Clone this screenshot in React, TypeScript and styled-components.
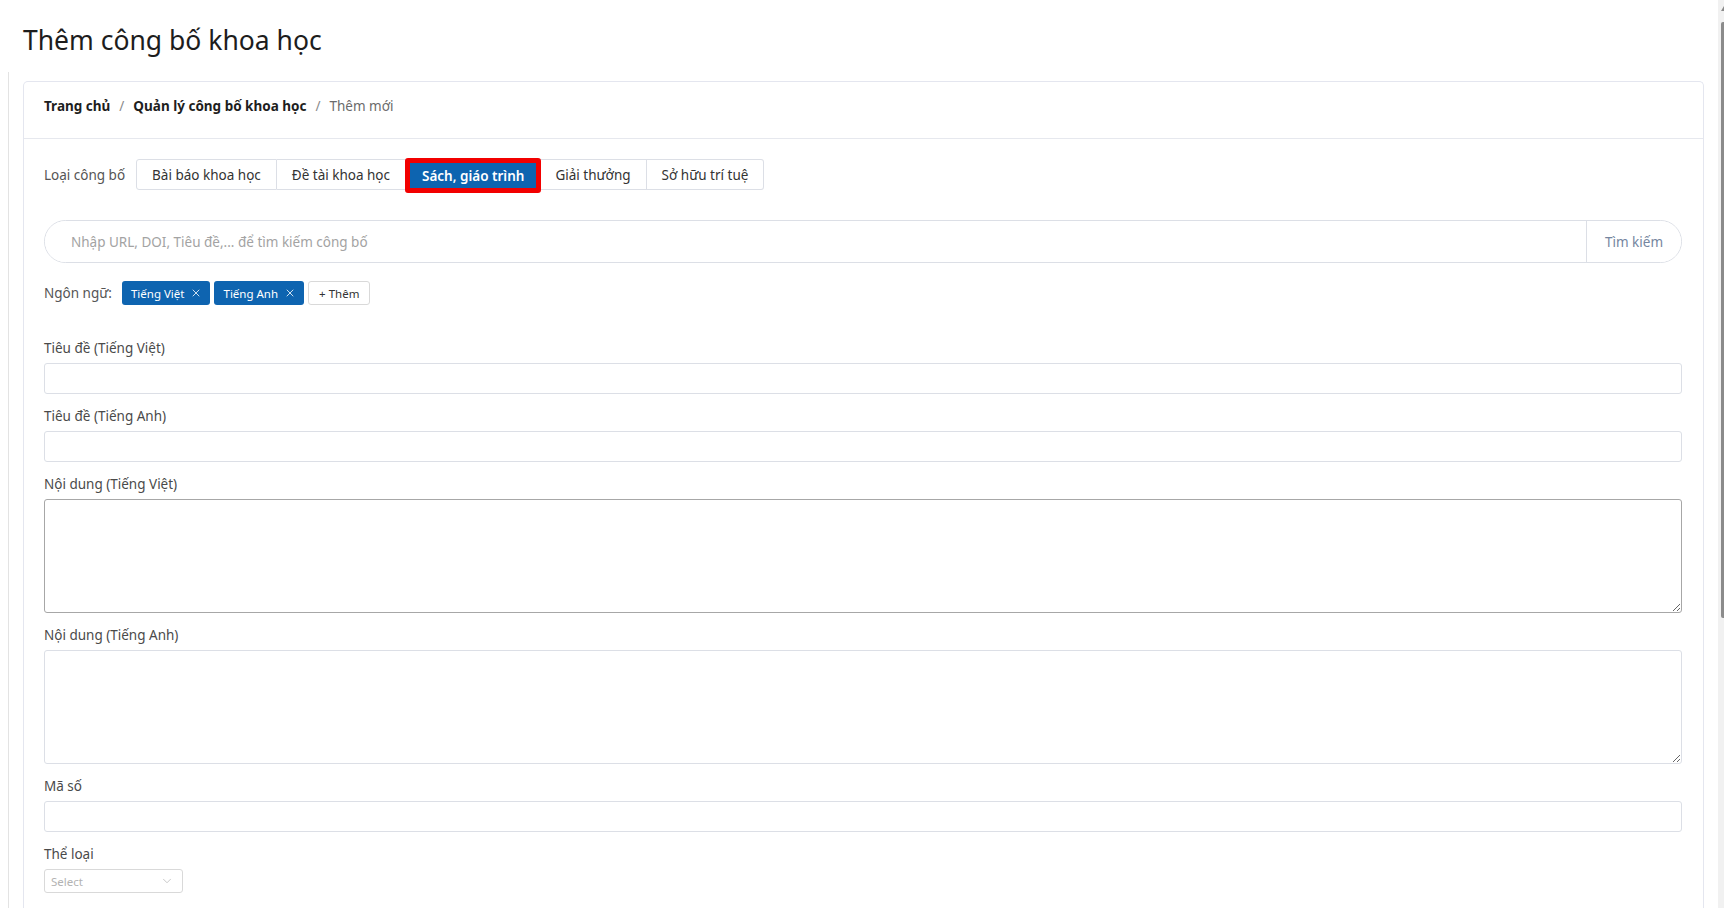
import styled, { createGlobalStyle } from "styled-components";
import { X, ChevronDown } from "lucide-react";

const GlobalStyle = createGlobalStyle`
  html, body {
    margin: 0;
    padding: 0;
    background: #fff;
    overflow: hidden;
  }
  body {
    font-family: "Noto Sans", "Open Sans", Arial, sans-serif;
    color: #333;
  }
  * {
    box-sizing: border-box;
  }
`;

const Shell = styled.div`
  display: flex;
  height: 100vh;
`;

const Main = styled.main`
  flex: 1;
  min-width: 0;
  padding-right: 14px;
`;

const ScrollTrack = styled.div`
  width: 6px;
  background: #f1f1f1;
  display: flex;
  flex-direction: column;
  align-items: flex-end;
  padding-top: 6px;
`;

const ScrollArrow = styled.div`
  width: 0;
  height: 0;
  border-left: 3px solid transparent;
  border-bottom: 5px solid #8a8a8a;
  margin-bottom: 11px;
`;

const ScrollThumb = styled.div`
  width: 3px;
  height: 596px;
  background: #8b8b8b;
  border-radius: 2px 0 0 2px;
`;

const Title = styled.h1`
  margin: 0;
  padding: 22px 0 0 23px;
  font-size: 26.5px;
  font-weight: 400;
  line-height: 36px;
  color: #1d1d1d;
`;

const Content = styled.div`
  margin: 14px 0 0 8px;
  border-left: 1px solid #e3e3e3;
  padding: 9px 0 0 14px;
  height: 100%;
`;

const Card = styled.section`
  border: 1px solid #e4e6ef;
  border-bottom: none;
  border-radius: 5px 5px 0 0;
  height: 100%;
`;

const CardHeader = styled.div`
  height: 57px;
  padding: 14px 20px 0;
  border-bottom: 1px solid #e6e8ee;
  display: flex;
  align-items: flex-start;
  font-size: 13.5px;
  line-height: 20px;
`;

const Crumb = styled.span<{ $current?: boolean }>`
  font-weight: ${({ $current }) => ($current ? 400 : 700)};
  color: ${({ $current }) => ($current ? "#6b6b6b" : "#1e1e1e")};
`;

const CrumbSep = styled.span`
  color: #8a8a8a;
  margin: 0 9px;
`;

const CardBody = styled.div`
  padding: 20px 21px 0 20px;
`;

const TypeRow = styled.div`
  display: flex;
  align-items: center;
`;

const RowLabel = styled.span`
  font-size: 13.5px;
  color: #555;
  margin-right: 11px;
`;

const TabGroup = styled.div`
  display: flex;
  align-items: flex-start;
`;

const Tab = styled.button<{ $active?: boolean; $first?: boolean; $last?: boolean }>`
  height: 31px;
  padding: 0 15px;
  font-family: inherit;
  font-size: 13.5px;
  color: #333;
  background: #fff;
  border: 1px solid #dcdfe6;
  border-left: ${({ $first }) => ($first ? "1px solid #dcdfe6" : "none")};
  border-radius: ${({ $first, $last }) =>
    $first ? "3px 0 0 3px" : $last ? "0 3px 3px 0" : "0"};
  cursor: pointer;

  ${({ $active }) =>
    $active &&
    `
    height: 35px;
    margin: -1px -1px -3px -1px;
    padding: 0 12px;
    border: 5px solid #f20000;
    border-radius: 3px;
    background: #0d64b0;
    color: #fff;
    font-weight: 600;
    position: relative;
  `}
`;

const SearchBox = styled.div`
  margin-top: 30px;
  height: 43px;
  display: flex;
  border: 1px solid #dcdfe6;
  border-radius: 22px;
  overflow: hidden;
`;

const SearchInput = styled.input`
  flex: 1;
  border: none;
  outline: none;
  padding: 0 0 0 26px;
  font-family: inherit;
  font-size: 13.5px;
  color: #333;

  &::placeholder {
    color: #a3a3a3;
  }
`;

const SearchButton = styled.button`
  width: 95px;
  border: none;
  border-left: 1px solid #dcdfe6;
  background: #fff;
  font-family: inherit;
  font-size: 13.5px;
  color: #7586a0;
  padding: 0;
  cursor: pointer;
`;

const LangRow = styled.div`
  margin-top: 18px;
  display: flex;
  align-items: center;
  gap: 4px;
`;

const LangLabel = styled.span`
  font-size: 13.5px;
  color: #555;
  margin-right: 6px;
`;

const Chip = styled.span`
  height: 24px;
  display: inline-flex;
  align-items: center;
  gap: 6px;
  padding: 0 8px 0 9px;
  background: #0e64b0;
  color: #fff;
  border-radius: 3px;
  font-size: 11.5px;
`;

const AddChip = styled.button`
  height: 24px;
  padding: 0 10px;
  border: 1px solid #d9d9d9;
  border-radius: 3px;
  background: #fff;
  font-family: inherit;
  font-size: 11.5px;
  color: #333;
`;

const Fields = styled.div`
  margin-top: 33px;
  display: flex;
  flex-direction: column;
  gap: 12px;
`;

const Field = styled.div`
  display: flex;
  flex-direction: column;
`;

const FieldLabel = styled.label`
  font-size: 13.5px;
  line-height: 20px;
  color: #4a4a4a;
  margin-bottom: 5px;
`;

const TextInput = styled.input`
  height: 31px;
  border: 1px solid #dcdfe6;
  border-radius: 3px;
  padding: 0 10px;
  font-family: inherit;
  outline: none;
`;

const TextArea = styled.textarea<{ $strong?: boolean }>`
  display: block;
  height: 114px;
  border: 1px solid ${({ $strong }) => ($strong ? "#a7a7a7" : "#dcdfe6")};
  border-radius: 3px;
  padding: 8px 10px;
  font-family: inherit;
  outline: none;
  resize: vertical;
`;

const SelectBox = styled.div`
  width: 139px;
  height: 24px;
  border: 1px solid #d9d9d9;
  border-radius: 3px;
  display: flex;
  align-items: center;
  justify-content: space-between;
  padding: 0 8px 0 6px;
  font-size: 11.5px;
  color: #b3b3b3;
`;

const tabs = ["Bài báo khoa học", "Đề tài khoa học", "Sách, giáo trình", "Giải thưởng", "Sở hữu trí tuệ"];

const App = () => {
  return (
    <>
      <GlobalStyle />
      <Shell>
        <Main>
          <Title>Thêm công bố khoa học</Title>
          <Content>
            <Card>
              <CardHeader>
                <Crumb>Trang chủ</Crumb>
                <CrumbSep>/</CrumbSep>
                <Crumb>Quản lý công bố khoa học</Crumb>
                <CrumbSep>/</CrumbSep>
                <Crumb $current>Thêm mới</Crumb>
              </CardHeader>
              <CardBody>
                <TypeRow>
                  <RowLabel>Loại công bố</RowLabel>
                  <TabGroup>
                    {tabs.map((t, i) => (
                      <Tab
                        key={t}
                        $first={i === 0}
                        $last={i === tabs.length - 1}
                        $active={i === 2}
                      >
                        {t}
                      </Tab>
                    ))}
                  </TabGroup>
                </TypeRow>

                <SearchBox>
                  <SearchInput placeholder="Nhập URL, DOI, Tiêu đề,... để tìm kiếm công bố" />
                  <SearchButton>Tìm kiếm</SearchButton>
                </SearchBox>

                <LangRow>
                  <LangLabel>Ngôn ngữ:</LangLabel>
                  <Chip>
                    Tiếng Việt <X size={12} strokeWidth={1.6} />
                  </Chip>
                  <Chip>
                    Tiếng Anh <X size={12} strokeWidth={1.6} />
                  </Chip>
                  <AddChip>+ Thêm</AddChip>
                </LangRow>

                <Fields>
                  <Field>
                    <FieldLabel>Tiêu đề (Tiếng Việt)</FieldLabel>
                    <TextInput />
                  </Field>
                  <Field>
                    <FieldLabel>Tiêu đề (Tiếng Anh)</FieldLabel>
                    <TextInput />
                  </Field>
                  <Field>
                    <FieldLabel>Nội dung (Tiếng Việt)</FieldLabel>
                    <TextArea $strong />
                  </Field>
                  <Field>
                    <FieldLabel>Nội dung (Tiếng Anh)</FieldLabel>
                    <TextArea />
                  </Field>
                  <Field>
                    <FieldLabel>Mã số</FieldLabel>
                    <TextInput />
                  </Field>
                  <Field>
                    <FieldLabel>Thể loại</FieldLabel>
                    <SelectBox>
                      Select
                      <ChevronDown size={14} strokeWidth={1.3} color="#b8b8b8" />
                    </SelectBox>
                  </Field>
                </Fields>
              </CardBody>
            </Card>
          </Content>
        </Main>
        <ScrollTrack>
          <ScrollArrow />
          <ScrollThumb />
        </ScrollTrack>
      </Shell>
    </>
  );
};

export default App;
